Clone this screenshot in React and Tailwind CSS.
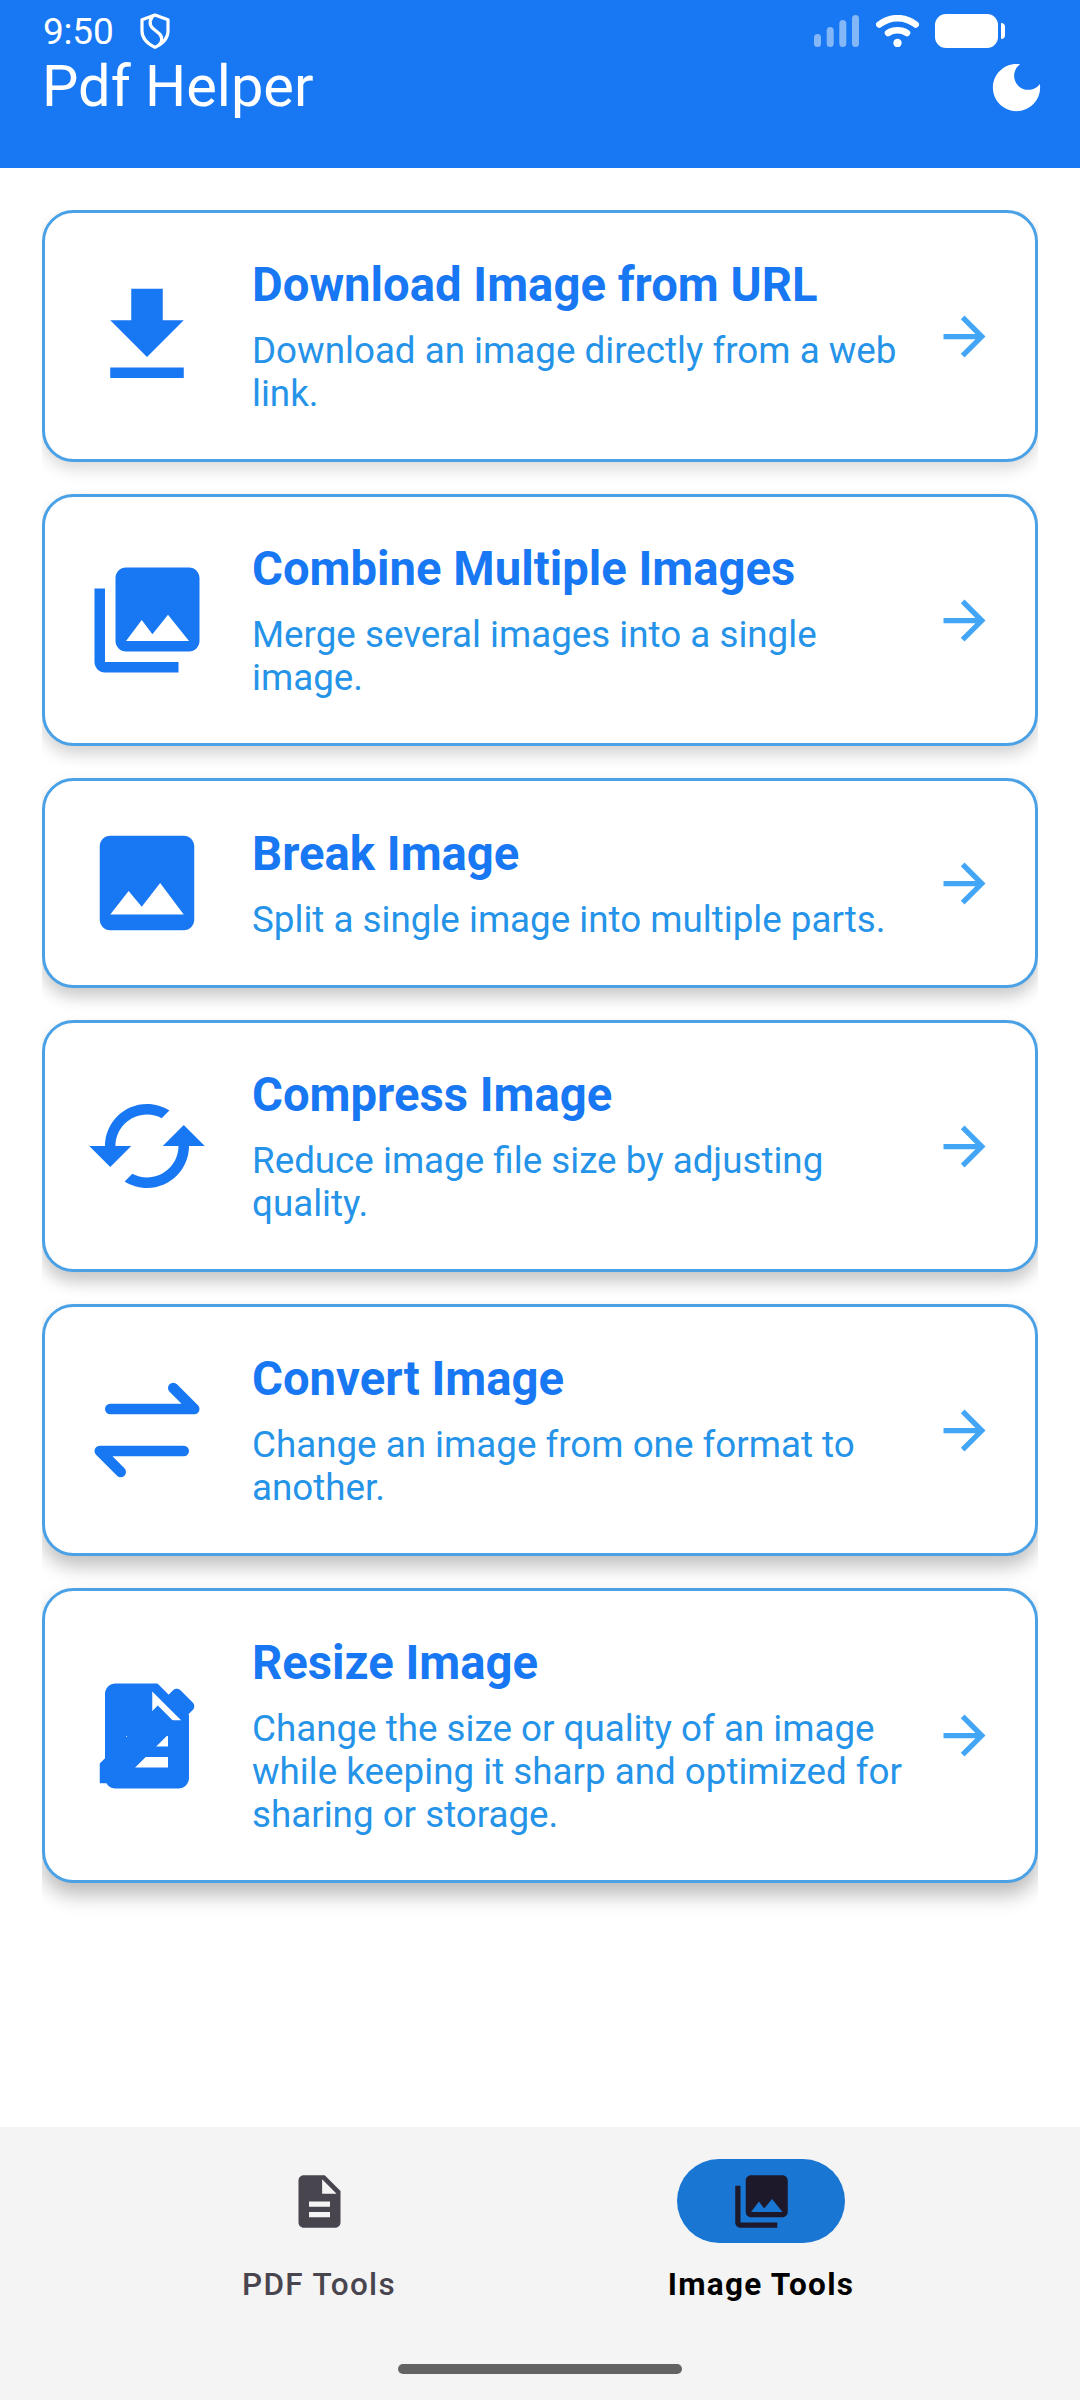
import { useState } from 'react';

const tools = [
  {
    title: 'Download Image from URL',
    text: 'Download an image directly from a web link.',
    icon: 'download',
    shadow: 'shadow-[0_7px_16px_rgba(0,0,0,0.15)]',
  },
  {
    title: 'Combine Multiple Images',
    text: 'Merge several images into a single image.',
    icon: 'library',
    shadow: 'shadow-[0_8px_16px_rgba(0,0,0,0.18)]',
  },
  {
    title: 'Break Image',
    text: 'Split a single image into multiple parts.',
    icon: 'image',
    shadow: 'shadow-[0_9px_16px_rgba(0,0,0,0.21)]',
  },
  {
    title: 'Compress Image',
    text: 'Reduce image file size by adjusting quality.',
    icon: 'cached',
    shadow: 'shadow-[0_10px_16px_rgba(0,0,0,0.22)]',
  },
  {
    title: 'Convert Image',
    text: 'Change an image from one format to another.',
    icon: 'swap',
    shadow: 'shadow-[0_11px_18px_rgba(0,0,0,0.24)]',
  },
  {
    title: 'Resize Image',
    text: 'Change the size or quality of an image while keeping it sharp and optimized for sharing or storage.',
    icon: 'resize',
    shadow: 'shadow-[0_12px_20px_rgba(0,0,0,0.27)]',
  },
];

const icons = {
  download: <path d="M19 9h-4V3H9v6H5l7 7 7-7zM5 18v2h14v-2H5z" />,
  library: (
    <path d="M22 16V4c0-1.1-.9-2-2-2H8c-1.1 0-2 .9-2 2v12c0 1.1.9 2 2 2h12c1.1 0 2-.9 2-2zM11 12l2.03 2.71L16 11l4 5H8l3-4zM2 6v14c0 1.1.9 2 2 2h14v-2H4V6H2z" />
  ),
  image: (
    <path d="M21 19V5c0-1.1-.9-2-2-2H5c-1.1 0-2 .9-2 2v14c0 1.1.9 2 2 2h14c1.1 0 2-.9 2-2zM8.5 13.5l2.5 3.01L14.5 12l4.5 6H5l3.5-4.5z" />
  ),
  cached: (
    <path d="M19 8l-4 4h3c0 3.31-2.69 6-6 6-1.01 0-1.97-.25-2.8-.7l-1.46 1.46C8.97 19.54 10.43 20 12 20c4.42 0 8-3.58 8-8h3l-4-4zM6 12c0-3.31 2.69-6 6-6 1.01 0 1.97.25 2.8.7l1.46-1.46C15.03 4.46 13.57 4 12 4c-4.42 0-8 3.58-8 8H1l4 4 4-4H6z" />
  ),
  swap: (
    <path
      d="M5 8h16l-4-4M19 16H3l4 4"
      fill="none"
      stroke="currentColor"
      strokeWidth="2"
      strokeLinecap="round"
      strokeLinejoin="round"
    />
  ),
  document: (
    <path d="M14 2H6c-1.1 0-2 .9-2 2v16c0 1.1.9 2 2 2h12c1.1 0 2-.9 2-2V8l-6-6zm2 16H8v-2h8v2zm0-4H8v-2h8v2zm-3-5V3.5L18.5 9H13z" />
  ),
  arrow: <path d="M12 4l-1.41 1.41L16.17 11H4v2h12.17l-5.58 5.59L12 20l8-8z" />,
  moon: (
    <path d="M12 3c-4.97 0-9 4.03-9 9s4.03 9 9 9 9-4.03 9-9c0-.46-.04-.92-.1-1.36-.98 1.37-2.58 2.26-4.4 2.26-2.98 0-5.4-2.42-5.4-5.4 0-1.81.89-3.42 2.26-4.4C12.92 3.04 12.46 3 12 3z" />
  ),
};

// a pencil laid over the document
icons.resize = (
  <>
    {icons.document}
    <path d="M3 17.25V21h3.75L17.81 9.94l-3.75-3.75L3 17.25zM20.71 7.04c.39-.39.39-1.02 0-1.41l-2.34-2.34c-.39-.39-1.02-.39-1.41 0l-1.83 1.83 3.75 3.75 1.83-1.83z" />
  </>
);

function Icon({ name, className }) {
  return (
    <svg viewBox="0 0 24 24" fill="currentColor" fillRule="evenodd" className={`shrink-0 ${className}`}>
      {icons[name]}
    </svg>
  );
}

function StatusBar() {
  return (
    <div className="flex h-[62px] items-center pl-[43px] pr-[75px]">
      <span className="text-[37px] leading-none tracking-[-0.2px]">9:50</span>
      <svg viewBox="0 0 30 36" className="ml-[26px] h-9 w-[30px]" fill="none" stroke="currentColor" strokeWidth="3.2" strokeLinejoin="round">
        <path d="M15 2L2 6.8V18c0 7.500 5.500 12.800 13 16.400C22.500 30.800 28 25.500 28 18V6.800z" />
        <path d="M14.500 2C9.500 5 8.500 11.500 13 15.500l5.500 4.500c4.500 3.500 4 8.500 .5 12" />
      </svg>
      <div className="ml-auto flex items-center gap-4">
        <svg viewBox="0 0 46 32" className="h-8 w-[46px]" fill="#fff" fillOpacity="0.47">
          <rect x="0" y="19" width="7" height="13" rx="3.500" />
          <rect x="12.700" y="12" width="7" height="20" rx="3.500" />
          <rect x="25.300" y="5" width="7" height="27" rx="3.500" />
          <rect x="38" y="0" width="7" height="32" rx="3.500" />
        </svg>
        <svg viewBox="0 0 43 32" className="h-8 w-[43px]" fill="none" stroke="#fff" strokeWidth="6.500" strokeLinecap="round">
          <path d="M3.300 9.500C14 1 29 1 39.700 9.500" />
          <path d="M12 18c5.500-3.700 13.500-3.700 19 0" />
          <circle cx="21.500" cy="28" r="4.200" fill="#fff" stroke="none" />
        </svg>
        <div className="flex items-center gap-[3px]">
          <div className="h-[34px] w-[63px] rounded-[11px] bg-white" />
          <div className="h-4 w-1 rounded-r-[4px] bg-white" />
        </div>
      </div>
    </div>
  );
}

function ToolCard({ tool }) {
  return (
    <button
      type="button"
      className={`flex w-full items-center rounded-[31.5px] border-[3px] border-[#4aa1e6] bg-white py-[39px] pr-[39px] pl-[39px] text-left ${tool.shadow}`}
    >
      <Icon name={tool.icon} className="size-[126px] text-[#1877f2]" />
      <span className="ml-[42px] block min-h-[125px] flex-1">
        <span className="block pt-1 text-[47.25px] leading-[58px] font-bold text-[#1877f2]">{tool.title}</span>
        <span className="mt-[15px] mb-[5px] block text-[36.75px] leading-[43px] text-[#2593e8]">{tool.text}</span>
      </span>
      <Icon name="arrow" className="ml-[21px] size-[63px] text-[#42a5f5]" />
    </button>
  );
}

export default function App() {
  const [tab, setTab] = useState('image');

  return (
    <div className="flex h-[2400px] w-[1080px] flex-col bg-white font-['Roboto',sans-serif]">
      <header className="h-[168px] bg-[#1877f2] text-white">
        <StatusBar />
        <div className="flex h-[50px] items-center justify-between pr-8 pl-[42px]">
          <h1 className="text-[57.75px] leading-none">Pdf Helper</h1>
          <Icon name="moon" className="size-[63px]" />
        </div>
      </header>

      <main className="mx-[42px] mt-[42px] flex flex-1 flex-col gap-8 overflow-hidden">
        {tools.map((tool) => (
          <ToolCard key={tool.title} tool={tool} />
        ))}
      </main>

      <nav className="flex h-[273px] flex-col items-center bg-[#f4f4f4] pt-8">
        <div className="flex">
          <button type="button" onClick={() => setTab('pdf')} className="flex w-[442px] flex-col items-center">
            <span
              className={`flex h-[84px] w-[168px] items-center justify-center rounded-full ${
                tab === 'pdf' ? 'bg-[#1976d2] text-[#1d192b]' : 'text-[#49454f]'
              }`}
            >
              <Icon name="document" className="size-[63px]" />
            </span>
            <span
              className={`mt-[21px] text-[31.5px] leading-[42px] tracking-[1.3px] ${
                tab === 'pdf' ? 'font-bold text-black' : 'font-medium text-[#49454f]'
              }`}
            >
              PDF Tools
            </span>
          </button>
          <button type="button" onClick={() => setTab('image')} className="flex w-[442px] flex-col items-center">
            <span
              className={`flex h-[84px] w-[168px] items-center justify-center rounded-full ${
                tab === 'image' ? 'bg-[#1976d2] text-[#1d192b]' : 'text-[#49454f]'
              }`}
            >
              <Icon name="library" className="size-[63px]" />
            </span>
            <span
              className={`mt-[21px] text-[31.5px] leading-[42px] tracking-[1.3px] ${
                tab === 'image' ? 'font-bold text-black' : 'font-medium text-[#49454f]'
              }`}
            >
              Image Tools
            </span>
          </button>
        </div>
        <div className="mt-auto mb-[26px] h-2.5 w-[284px] rounded-full bg-[#636363]" />
      </nav>
    </div>
  );
}
